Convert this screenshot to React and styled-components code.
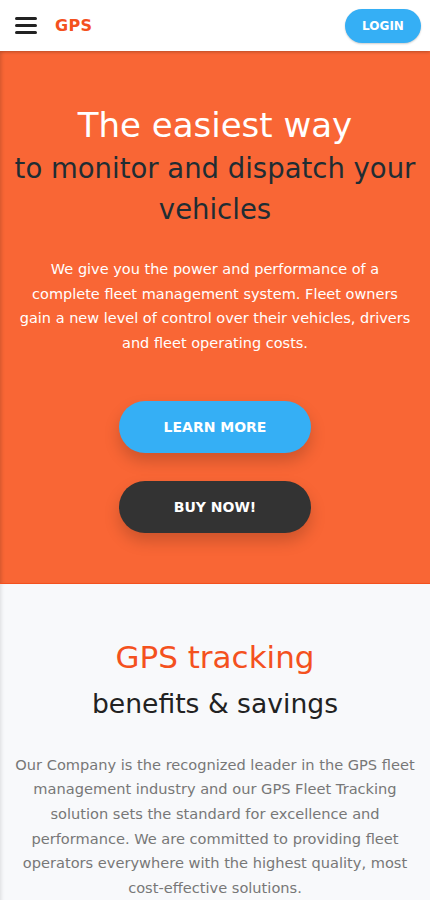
import React from "react";
import styled, { createGlobalStyle } from "styled-components";

const GlobalStyle = createGlobalStyle`
  body {
    margin: 0;
    font-family: "DejaVu Sans", "Open Sans", sans-serif;
    background: #f8f9fb;
  }
  * { box-sizing: border-box; }
`;

const Header = styled.header`
  height: 51px;
  background: #fff;
  display: flex;
  align-items: center;
  padding: 0 9px 0 15px;
  position: relative;
  z-index: 2;
  box-shadow: 0 1px 3px rgba(0, 0, 0, 0.25);
`;

const Burger = styled.div`
  width: 22px;
  display: flex;
  flex-direction: column;
  gap: 4px;
  span {
    height: 3px;
    border-radius: 2px;
    background: #222;
  }
`;

const Logo = styled.div`
  margin-left: 18px;
  color: #f4511e;
  font-weight: 700;
  font-size: 16px;
  letter-spacing: 0.3px;
`;

const Pill = styled.button`
  border: none;
  border-radius: 999px;
  font-family: inherit;
  font-weight: 700;
  text-transform: uppercase;
  color: #fff;
  cursor: pointer;
  background: ${(p) => (p.$dark ? "#333333" : "#35aff5")};
`;

const LoginButton = styled(Pill)`
  margin-left: auto;
  width: 76px;
  height: 34px;
  font-size: 12px;
  box-shadow: 0 1px 2px rgba(0, 0, 0, 0.2);
`;

const Hero = styled.section`
  background: #f96635;
  padding: 54px 10px 50px;
  text-align: center;
  box-shadow: inset 4px 0 4px -3px rgba(0, 0, 0, 0.18);
  border-bottom: 1px solid #f4511e;
`;

const HeroTitle = styled.h1`
  margin: 0;
  color: #fff;
  font-weight: 400;
  font-size: 34px;
  line-height: 40px;
`;

const HeroSub = styled.h2`
  margin: 3px 0 0;
  color: #1f2d33;
  font-weight: 400;
  font-size: 27.5px;
  line-height: 41px;
`;

const HeroText = styled.p`
  margin: 27px auto 0;
  max-width: 396px;
  color: #fff;
  font-size: 14.5px;
  line-height: 24.7px;
`;

const Actions = styled.div`
  margin-top: 45px;
  display: flex;
  flex-direction: column;
  align-items: center;
  gap: 28px;
`;

const BigButton = styled(Pill)`
  width: 192px;
  height: 52px;
  font-size: 14px;
  box-shadow: 0 8px 16px rgba(0, 0, 0, 0.18);
`;

const Benefits = styled.section`
  background: #f8f9fb;
  padding: 53px 12px 20px;
  text-align: center;
  box-shadow: inset 4px 0 4px -3px rgba(0, 0, 0, 0.12);
`;

const BenefitsTitle = styled.h2`
  margin: 0;
  color: #f4511e;
  font-weight: 400;
  font-size: 31px;
  line-height: 40px;
`;

const BenefitsSub = styled.h3`
  margin: 7px 0 0;
  color: #222;
  font-weight: 400;
  font-size: 26.6px;
  line-height: 40px;
`;

const BenefitsText = styled.p`
  margin: 29px 0 0;
  color: #777;
  font-size: 14.6px;
  line-height: 24.6px;
`;

export default function App() {
  return (
    <>
      <GlobalStyle />
      <Header>
        <Burger>
          <span />
          <span />
          <span />
        </Burger>
        <Logo>GPS</Logo>
        <LoginButton>Login</LoginButton>
      </Header>
      <Hero>
        <HeroTitle>The easiest way</HeroTitle>
        <HeroSub>to monitor and dispatch your vehicles</HeroSub>
        <HeroText>
          We give you the power and performance of a complete fleet management
          system. Fleet owners gain a new level of control over their vehicles,
          drivers and fleet operating costs.
        </HeroText>
        <Actions>
          <BigButton>Learn more</BigButton>
          <BigButton $dark>Buy now!</BigButton>
        </Actions>
      </Hero>
      <Benefits>
        <BenefitsTitle>GPS tracking</BenefitsTitle>
        <BenefitsSub>benefits &amp; savings</BenefitsSub>
        <BenefitsText>
          Our Company is the recognized leader in the GPS fleet management
          industry and our GPS Fleet Tracking solution sets the standard for
          excellence and performance. We are committed to providing fleet
          operators everywhere with the highest quality, most cost-effective
          solutions.
        </BenefitsText>
      </Benefits>
    </>
  );
}
